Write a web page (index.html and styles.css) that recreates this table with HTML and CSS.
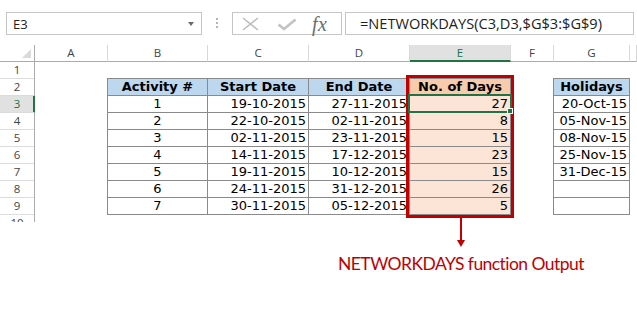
FILE: index.html
```html
<!DOCTYPE html>
<html>
<head>
<meta charset="utf-8">
<link rel="stylesheet" href="styles.css">
</head>
<body>
<div class="app">
  <div class="fbar">
    <div class="namebox"><span class="ref">E3</span><span class="dd"></span></div>
    <div class="grip"><i></i><i></i><i></i></div>
    <div class="btns">
      <svg class="ico-x" width="17" height="14" viewBox="0 0 17 14"><path d="M1 1 L16 13 M16 1 L1 13" stroke="#bdbdbd" stroke-width="1.6" fill="none"/></svg>
      <svg class="ico-ok" width="20" height="13" viewBox="0 0 20 13"><path d="M1.5 6.5 L7 11 L18.5 1.5" stroke="#c4c4c4" stroke-width="2.8" fill="none"/></svg>
      <span class="fx">fx</span>
    </div>
    <div class="formula">=NETWORKDAYS(C3,D3,$G$3:$G$9)</div>
  </div>

  <div class="sheet">
    <div class="corner"><svg width="10" height="10" viewBox="0 0 10 10"><path d="M9 0 L9 9 L0 9 Z" fill="#dadada"/></svg></div>
    <div class="ch">A</div>
    <div class="ch">B</div>
    <div class="ch">C</div>
    <div class="ch">D</div>
    <div class="ch sel">E</div>
    <div class="ch">F</div>
    <div class="ch">G</div>
    <div class="ch"></div>

    <div class="rows">
      <div class="rh">1</div>
      <div class="rh">2</div>
      <div class="rh sel">3</div>
      <div class="rh">4</div>
      <div class="rh">5</div>
      <div class="rh">6</div>
      <div class="rh">7</div>
      <div class="rh">8</div>
      <div class="rh">9</div>
      <div class="rh">10</div>
    </div>

    <div class="tbl">
      <div class="c hd">Activity #</div><div class="c hd">Start Date</div><div class="c hd">End Date</div><div class="c hd eh">No. of Days</div>
      <div class="c ctr">1</div><div class="c num">19-10-2015</div><div class="c num">27-11-2015</div><div class="c num e">27</div>
      <div class="c ctr">2</div><div class="c num">22-10-2015</div><div class="c num">02-11-2015</div><div class="c num e">8</div>
      <div class="c ctr">3</div><div class="c num">02-11-2015</div><div class="c num">23-11-2015</div><div class="c num e">15</div>
      <div class="c ctr">4</div><div class="c num">14-11-2015</div><div class="c num">17-12-2015</div><div class="c num e">23</div>
      <div class="c ctr">5</div><div class="c num">19-11-2015</div><div class="c num">10-12-2015</div><div class="c num e">15</div>
      <div class="c ctr">6</div><div class="c num">24-11-2015</div><div class="c num">31-12-2015</div><div class="c num e">26</div>
      <div class="c ctr">7</div><div class="c num">30-11-2015</div><div class="c num">05-12-2015</div><div class="c num e">5</div>
    </div>

    <div class="tbl hol">
      <div class="c hd">Holidays</div>
      <div class="c num">20-Oct-15</div>
      <div class="c num">05-Nov-15</div>
      <div class="c num">08-Nov-15</div>
      <div class="c num">25-Nov-15</div>
      <div class="c num">31-Dec-15</div>
      <div class="c"></div>
      <div class="c"></div>
    </div>
  </div>

  <div class="note">NETWORKDAYS function Output</div>

  <div class="redbox"></div>
  <div class="selbox"><span class="handle"></span></div>
  <svg class="arrow" width="12" height="31" viewBox="0 0 12 31"><rect x="5" y="0" width="2" height="24" fill="#c00000"/><path d="M2 23 L10 23 L6 30 Z" fill="#c00000"/></svg>
</div>
</body>
</html>
```

FILE: styles.css
```css
* { box-sizing: border-box; }
html, body { margin: 0; padding: 0; background: #fff; }
body { font-family: "Open Sans", "Noto Sans", sans-serif; color: #222; }

.app { position: relative; width: 637px; height: 318px; overflow: hidden; }

/* formula bar */
.fbar { display: flex; align-items: flex-start; height: 45px; padding: 12px 3px 0 6px; }
.namebox { width: 196px; height: 23px; border: 1px solid #c6c6c6; display: flex; align-items: center; justify-content: space-between; padding: 0 7px 0 6px; font-size: 13px; color: #222; }
.namebox .dd { width: 0; height: 0; border-left: 3.5px solid transparent; border-right: 3.5px solid transparent; border-top: 4px solid #6a6a6a; }
.grip { width: 2px; margin: 6px 14px 0 14px; display: flex; flex-direction: column; gap: 2px; }
.grip i { display: block; width: 2px; height: 2px; background: #b5b5b5; }
.btns { width: 110px; height: 23px; border: 1px solid #c6c6c6; display: flex; align-items: center; padding-left: 9px; }
.ico-x { margin-top: 1px; }
.ico-ok { margin-left: 18px; margin-top: 1px; }
.fx { margin-left: 15px; font-family: "Liberation Serif", "DejaVu Serif", serif; font-style: italic; font-size: 20px; line-height: 20px; color: #6b6b6b; letter-spacing: 0.5px; }
.formula { flex: 1; height: 23px; border: 1px solid #c6c6c6; margin-left: 3px; padding-left: 14px; font-size: 14.6px; line-height: 21px; color: #222; white-space: nowrap; }

/* sheet grid */
.sheet { display: grid; grid-template-columns: 35px 73px 100px 101px 101px 101px 43px 76px 1fr; grid-template-rows: repeat(11, 17px); height: 177px; overflow: hidden; }
.corner { border-right: 1px solid #ababab; border-bottom: 1px solid #ababab; display: flex; align-items: flex-end; justify-content: flex-end; padding: 0 2px 2px 0; }
.corner svg { display: block; }
.ch { border-right: 1px solid #d8d8d8; border-bottom: 1px solid #ababab; text-align: center; font-size: 11.5px; line-height: 16px; color: #444; }
.ch.sel { background: #e1e1e1; border-bottom: 2px solid #217346; color: #217346; }
.rows { grid-column: 1; grid-row: 2 / span 10; display: flex; flex-direction: column; border-right: 1px solid #ababab; }
.rh { height: 17px; flex: none; border-bottom: 1px solid #dcdcdc; text-align: center; font-size: 11.5px; line-height: 16px; color: #444; }
.rh.sel { background: #e1e1e1; color: #217346; box-shadow: inset -1px 0 0 #217346; margin-right: -1px; border-right: 1px solid #217346; }

/* data tables */
.tbl { grid-column: 3 / span 4; grid-row: 3 / span 8; align-self: start; justify-self: start; margin: -1px 0 0 -1px; display: grid; grid-template-columns: 99px 100px 100px 100px; grid-auto-rows: 16px; gap: 1px; background: #8a8a8a; border: 1px solid #8a8a8a; font-family: "DejaVu Sans", Verdana, sans-serif; font-size: 13px; color: #000; }
.tbl.hol { grid-column: 8; grid-template-columns: 75px; }
.c { background: #fff; line-height: 16px; padding: 0 2px; white-space: nowrap; overflow: hidden; }
.hd { background: #bdd7ee; font-weight: bold; text-align: center; }
.hd.eh { background: #f8cbad; }
.ctr { text-align: center; }
.num { text-align: right; }
.e { background: #fce4d6; }

/* annotation */
.note { margin: 31px 0 0 338px; font-family: Lato, "Open Sans", sans-serif; font-size: 17.5px; letter-spacing: -0.55px; line-height: 22px; color: #c00000; white-space: nowrap; }
.redbox { position: absolute; left: 406px; top: 75px; width: 108px; height: 143px; border: 3px solid #c00000; }
.selbox { position: absolute; left: 408px; top: 94px; width: 104px; height: 19px; border: 2px solid #217346; }
.handle { position: absolute; right: -3px; bottom: -3px; width: 6px; height: 6px; background: #217346; border: 1px solid #fff; }
.arrow { position: absolute; left: 455px; top: 217px; }
```
